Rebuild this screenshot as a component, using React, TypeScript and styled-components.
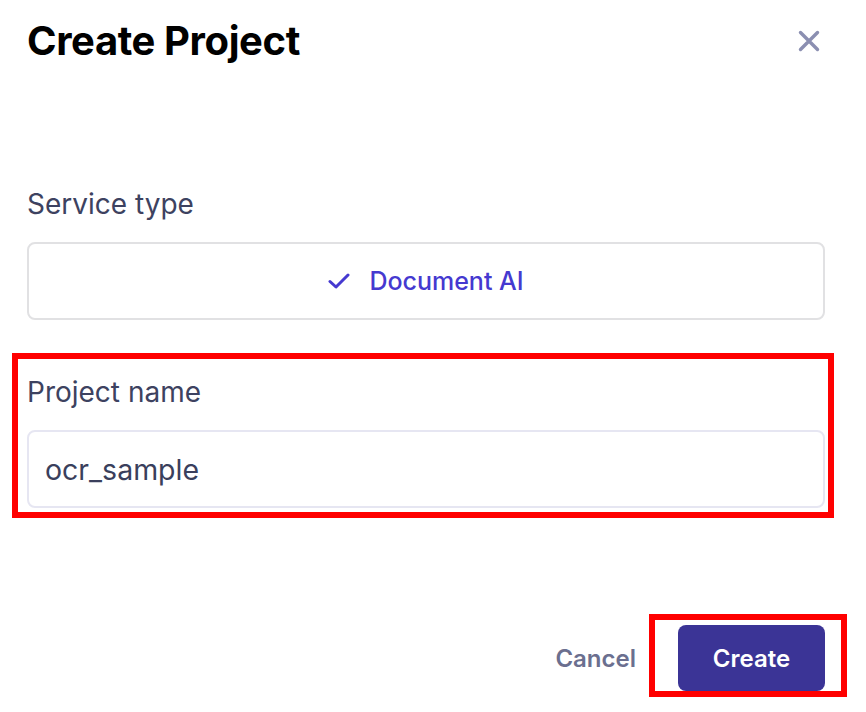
import React from "react";
import styled, { createGlobalStyle } from "styled-components";

const GlobalStyle = createGlobalStyle`
  html, body { margin: 0; padding: 0; background: #ffffff; }
  body { font-family: Inter, "Noto Sans", sans-serif; -webkit-font-smoothing: antialiased; }
  * { box-sizing: border-box; }
`;

const Dialog = styled.div`
  width: 866px;
  height: 712px;
  background: #ffffff;
  padding: 19px 41px 0 27px;
  display: flex;
  flex-direction: column;
`;

const Header = styled.div`
  display: flex;
  align-items: center;
  justify-content: space-between;
  height: 44px;
`;

const Title = styled.h1`
  margin: 0;
  font-size: 40px;
  line-height: 44px;
  font-weight: 700;
  color: #000000;
  letter-spacing: -0.4px;
`;

const CloseButton = styled.button`
  width: 32px;
  height: 32px;
  padding: 0;
  border: none;
  background: transparent;
  display: flex;
  align-items: center;
  justify-content: center;
  color: #8b8fb1;
  cursor: pointer;
`;

const Body = styled.div`
  display: flex;
  flex-direction: column;
  gap: 56px;
  margin-top: 125px;
`;

const Field = styled.div`
  display: flex;
  flex-direction: column;
  gap: 22px;
`;

type Inset = { $t: number; $r: number; $b: number; $l: number };

const Highlight = styled.div<Inset>`
  position: relative;
  &::after {
    content: "";
    position: absolute;
    top: ${(p) => -p.$t}px;
    right: ${(p) => -p.$r}px;
    bottom: ${(p) => -p.$b}px;
    left: ${(p) => -p.$l}px;
    border: 6px solid #ff0000;
    pointer-events: none;
  }
`;

const Label = styled.label`
  font-size: 28px;
  line-height: 32px;
  font-weight: 400;
  color: #3d4260;
`;

const ServiceBox = styled.div`
  height: 78px;
  border: 2px solid #e1e1e3;
  border-radius: 8px;
  display: flex;
  align-items: center;
  justify-content: center;
  gap: 19px;
  color: #4539d0;
  font-size: 25px;
  font-weight: 500;
`;

const Input = styled.input`
  height: 78px;
  width: 100%;
  border: 2px solid #e6e6f2;
  border-radius: 8px;
  padding: 0 16px;
  font-family: inherit;
  font-size: 28.5px;
  color: #3a3f5c;
  background: #ffffff;
  outline: none;
`;

const Footer = styled.div`
  margin-top: 117px;
  display: flex;
  justify-content: flex-end;
  align-items: center;
  gap: 42px;
`;

const CancelButton = styled.button`
  border: none;
  background: transparent;
  padding: 0;
  font-family: inherit;
  font-size: 24px;
  font-weight: 600;
  color: #6b6f8f;
  cursor: pointer;
`;

const PrimaryButton = styled.button`
  width: 147px;
  height: 66px;
  border: none;
  border-radius: 8px;
  background: #3b3496;
  color: #ffffff;
  font-family: inherit;
  font-size: 24px;
  font-weight: 600;
  cursor: pointer;
`;

export default function App() {
  return (
    <>
      <GlobalStyle />
      <Dialog>
        <Header>
          <Title>Create Project</Title>
          <CloseButton aria-label="Close">
            <svg width="22" height="22" viewBox="0 0 22 22" fill="none">
              <path d="M2.5 2.5L19.5 19.5M19.5 2.5L2.5 19.5" stroke="currentColor" strokeWidth="3.4" strokeLinecap="round" />
            </svg>
          </CloseButton>
        </Header>
        <Body>
          <Field>
            <Label>Service type</Label>
            <ServiceBox>
              <svg width="22" height="16" viewBox="0 0 22 16" fill="none">
                <path d="M2 8.5L8 14L20 2" stroke="currentColor" strokeWidth="3" strokeLinecap="round" strokeLinejoin="round" />
              </svg>
              <span>Document AI</span>
            </ServiceBox>
          </Field>
          <Highlight $t={23} $r={9} $b={10} $l={15}>
            <Field>
              <Label>Project name</Label>
              <Input defaultValue="ocr_sample" />
            </Field>
          </Highlight>
        </Body>
        <Footer>
          <CancelButton>Cancel</CancelButton>
          <Highlight $t={11} $r={22} $b={6} $l={29}>
            <PrimaryButton>Create</PrimaryButton>
          </Highlight>
        </Footer>
      </Dialog>
    </>
  );
}
